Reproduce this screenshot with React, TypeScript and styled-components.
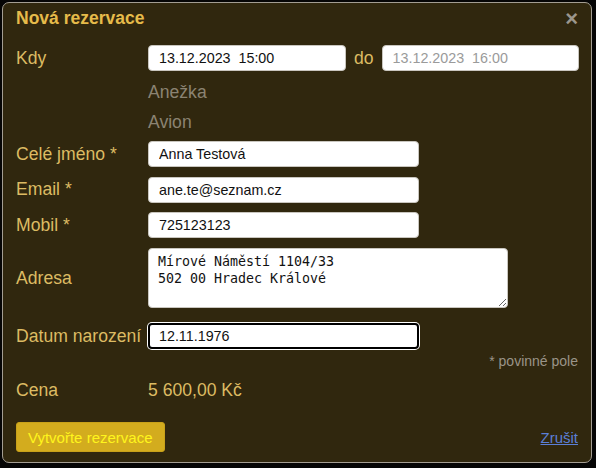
import styled, { createGlobalStyle } from 'styled-components';

const GlobalStyle = createGlobalStyle`
  html, body {
    margin: 0;
    padding: 0;
    background: #050505;
  }
  * {
    box-sizing: border-box;
  }
`;

const Dialog = styled.div`
  margin: 2px;
  width: 590px;
  height: 461px;
  background: #30270e;
  border: 1px solid #a39d92;
  border-radius: 7px;
  padding: 0 13px 0 13px;
  font-family: 'Liberation Sans', Arial, sans-serif;
  display: flex;
  flex-direction: column;
`;

const Header = styled.div`
  height: 38px;
  display: flex;
  justify-content: space-between;
  align-items: flex-start;
`;

const Title = styled.h1`
  margin: 0;
  font-size: 17.5px;
  line-height: 30px;
  font-weight: 700;
  color: #e6bb4a;
`;

const Close = styled.button`
  border: 0;
  background: none;
  padding: 0;
  margin: 0;
  font-family: 'Liberation Sans', Arial, sans-serif;
  font-size: 22px;
  font-weight: 700;
  line-height: 32px;
  color: #9b968c;
  cursor: pointer;
`;

const FieldRow = styled.div<{ $h: number; $pt?: number }>`
  display: grid;
  grid-template-columns: 132px 1fr;
  align-items: center;
  height: ${(p) => p.$h}px;
  padding-top: ${(p) => p.$pt ?? 0}px;
  padding-bottom: ${(p) => (p.$pt ? 4 : 0)}px;
`;

const Label = styled.label`
  font-size: 17.6px;
  color: #dcbb63;
  white-space: nowrap;
`;

const Info = styled.div<{ $gold?: boolean }>`
  font-size: 17.6px;
  color: ${(p) => (p.$gold ? '#dcbb63' : '#8b8372')};
`;

const Inline = styled.div`
  display: flex;
  align-items: center;
`;

const Joiner = styled.span`
  font-size: 17.6px;
  color: #dcbb63;
  margin: 0 8px;
`;

const TextInput = styled.input<{ $w: number; $muted?: boolean; $focused?: boolean }>`
  width: ${(p) => p.$w}px;
  height: 26px;
  padding: 0 ${(p) => (p.$focused ? 9 : 10)}px;
  border: ${(p) => (p.$focused ? '2px solid #000' : '1px solid #c9c6bf')};
  box-shadow: ${(p) => (p.$focused ? '0 0 0 1px #fff' : 'none')};
  border-radius: 4px;
  background: #fff;
  font-family: 'Liberation Sans', Arial, sans-serif;
  font-size: 14.3px;
  color: ${(p) => (p.$muted ? '#9a9a9a' : '#111')};
  outline: none;
`;

const TextArea = styled.textarea`
  width: 360px;
  height: 60px;
  padding: 5px 9px;
  border: 1px solid #c9c6bf;
  border-radius: 4px;
  background: #fff;
  font-family: 'DejaVu Sans Mono', 'Liberation Mono', monospace;
  font-size: 13.3px;
  line-height: 16.5px;
  color: #111;
  resize: both;
  outline: none;
`;

const Note = styled.div`
  height: 16px;
  text-align: right;
  font-size: 14px;
  line-height: 16px;
  color: #9a9488;
`;

const Footer = styled.div`
  margin-top: 11px;
  display: flex;
  justify-content: space-between;
  align-items: center;
`;

const SubmitButton = styled.button`
  height: 30px;
  padding: 0 11px;
  border: 1px solid #c8a11a;
  border-radius: 3px;
  background: #d3ac1e;
  color: #fff51c;
  font-family: 'Liberation Sans', Arial, sans-serif;
  font-size: 15px;
  cursor: pointer;
`;

const CancelLink = styled.a`
  font-size: 15px;
  color: #5b7fd6;
  text-decoration: underline;
  cursor: pointer;
`;

export default function App() {
  return (
    <>
      <GlobalStyle />
      <Dialog>
        <Header>
          <Title>Nová rezervace</Title>
          <Close aria-label="Zavřít">×</Close>
        </Header>

        <FieldRow $h={34}>
          <Label>Kdy</Label>
          <Inline>
            <TextInput $w={198} defaultValue="13.12.2023  15:00" />
            <Joiner>do</Joiner>
            <TextInput $w={197} $muted readOnly defaultValue="13.12.2023  16:00" />
          </Inline>
        </FieldRow>

        <FieldRow $h={34}>
          <span />
          <Info>Anežka</Info>
        </FieldRow>
        <FieldRow $h={27}>
          <span />
          <Info>Avion</Info>
        </FieldRow>

        <FieldRow $h={36}>
          <Label>Celé jméno *</Label>
          <TextInput $w={271} defaultValue="Anna Testová" />
        </FieldRow>
        <FieldRow $h={35.5}>
          <Label>Email *</Label>
          <TextInput $w={271} defaultValue="ane.te@seznam.cz" />
        </FieldRow>
        <FieldRow $h={35.5}>
          <Label>Mobil *</Label>
          <TextInput $w={271} defaultValue="725123123" />
        </FieldRow>
        <FieldRow $h={70}>
          <Label>Adresa</Label>
          <TextArea defaultValue={'Mírové Náměstí 1104/33\n502 00 Hradec Králové'} />
        </FieldRow>
        <FieldRow $h={40} $pt={10}>
          <Label>Datum narození</Label>
          <TextInput $w={271} $focused defaultValue="12.11.1976" />
        </FieldRow>

        <Note>* povinné pole</Note>

        <FieldRow $h={42}>
          <Label>Cena</Label>
          <Info $gold>5 600,00 Kč</Info>
        </FieldRow>

        <Footer>
          <SubmitButton>Vytvořte rezervace</SubmitButton>
          <CancelLink>Zrušit</CancelLink>
        </Footer>
      </Dialog>
    </>
  );
}
